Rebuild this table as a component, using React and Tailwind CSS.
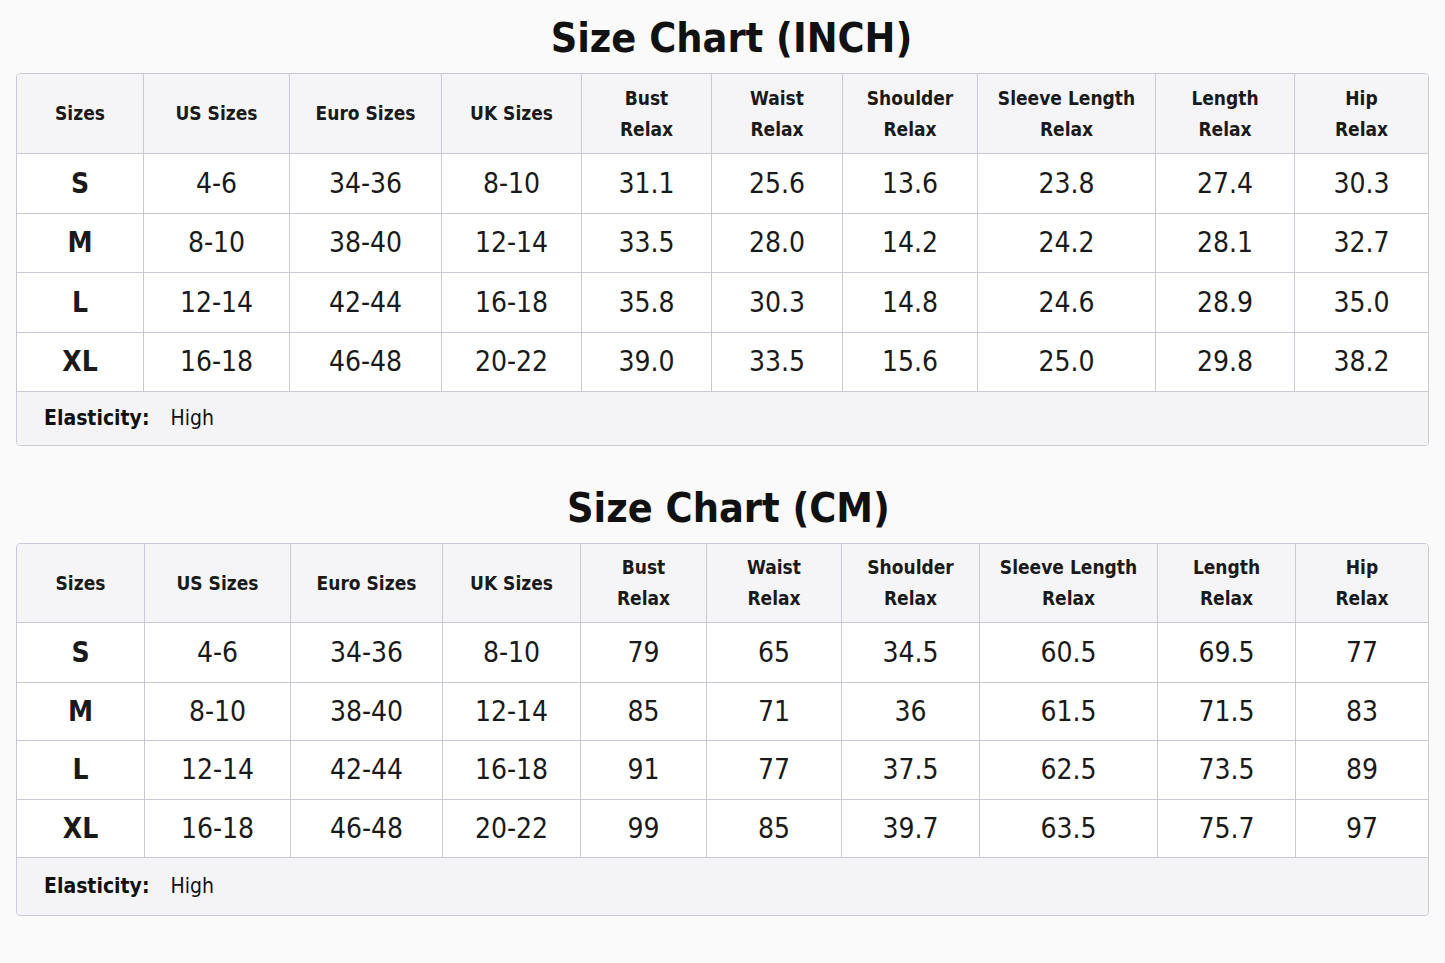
import React from "react";

const FONT = { fontFamily: '"DejaVu Sans Condensed", "Liberation Sans", sans-serif' };

const headers = [
  ["Sizes"],
  ["US Sizes"],
  ["Euro Sizes"],
  ["UK Sizes"],
  ["Bust", "Relax"],
  ["Waist", "Relax"],
  ["Shoulder", "Relax"],
  ["Sleeve Length", "Relax"],
  ["Length", "Relax"],
  ["Hip", "Relax"],
];

const inchRows = [
  ["S", "4-6", "34-36", "8-10", "31.1", "25.6", "13.6", "23.8", "27.4", "30.3"],
  ["M", "8-10", "38-40", "12-14", "33.5", "28.0", "14.2", "24.2", "28.1", "32.7"],
  ["L", "12-14", "42-44", "16-18", "35.8", "30.3", "14.8", "24.6", "28.9", "35.0"],
  ["XL", "16-18", "46-48", "20-22", "39.0", "33.5", "15.6", "25.0", "29.8", "38.2"],
];

const cmRows = [
  ["S", "4-6", "34-36", "8-10", "79", "65", "34.5", "60.5", "69.5", "77"],
  ["M", "8-10", "38-40", "12-14", "85", "71", "36", "61.5", "71.5", "83"],
  ["L", "12-14", "42-44", "16-18", "91", "77", "37.5", "62.5", "73.5", "89"],
  ["XL", "16-18", "46-48", "20-22", "99", "85", "39.7", "63.5", "75.7", "97"],
];

function Chart({ title, rows, cols, rowHeights, headerH, footerH, titlePad }) {
  return (
    <div className="flex flex-col items-center">
      <h1 className={`text-[41px] leading-[52px] font-bold text-[#111] mb-[9px] ${titlePad}`}>{title}</h1>
      <div className="w-full rounded-[4px] border border-[#c9c9d8] overflow-hidden bg-white">
        <div className={`grid ${cols}`}>
          {headers.map((h, i) => (
            <div
              key={i}
              className={`${headerH} bg-[#f5f5f7] border-b border-[#c9c9d8] ${i < 9 ? "border-r" : ""} flex flex-col items-center justify-center text-[19px] leading-[31px] font-bold text-[#1a1a1a]`}
            >
              {h.map((t, j) => (
                <span key={j}>{t}</span>
              ))}
            </div>
          ))}
          {rows.map((r, ri) =>
            r.map((c, ci) => (
              <div
                key={`${ri}-${ci}`}
                className={`${rowHeights[ri]} border-b border-[#c9c9d8] ${ci < 9 ? "border-r" : ""} flex items-center justify-center text-[28px] text-[#1a1a1a] ${ci === 0 ? "font-bold" : "font-normal"}`}
              >
                {c}
              </div>
            ))
          )}
        </div>
        <div className={`${footerH} bg-[#f4f4f6] flex items-center pl-[27px] text-[21px] text-[#111]`}>
          <span className="font-bold">Elasticity:</span>
          <span className="ml-[21px]">High</span>
        </div>
      </div>
    </div>
  );
}

export default function App() {
  return (
    <div className="w-[1445px] h-[963px] bg-[#fafafa] px-[16px] pt-[12px]" style={FONT}>
      <Chart
        title="Size Chart (INCH)"
        rows={inchRows}
        cols="grid-cols-[127px_146px_152px_140px_130px_131px_135px_178px_139px_minmax(0,1fr)]"
        rowHeights={["h-[60px]", "h-[59px]", "h-[60px]", "h-[59px]"]}
        headerH="h-[80px]"
        footerH="h-[53px]"
        titlePad="pl-[18px]"
      />
      <div className="h-[36px]" />
      <Chart
        title="Size Chart (CM)"
        rows={cmRows}
        cols="grid-cols-[128px_146px_152px_138px_126px_135px_138px_178px_138px_minmax(0,1fr)]"
        rowHeights={["h-[60px]", "h-[58px]", "h-[59px]", "h-[58px]"]}
        headerH="h-[79px]"
        footerH="h-[57px]"
        titlePad="pl-[12px]"
      />
    </div>
  );
}
